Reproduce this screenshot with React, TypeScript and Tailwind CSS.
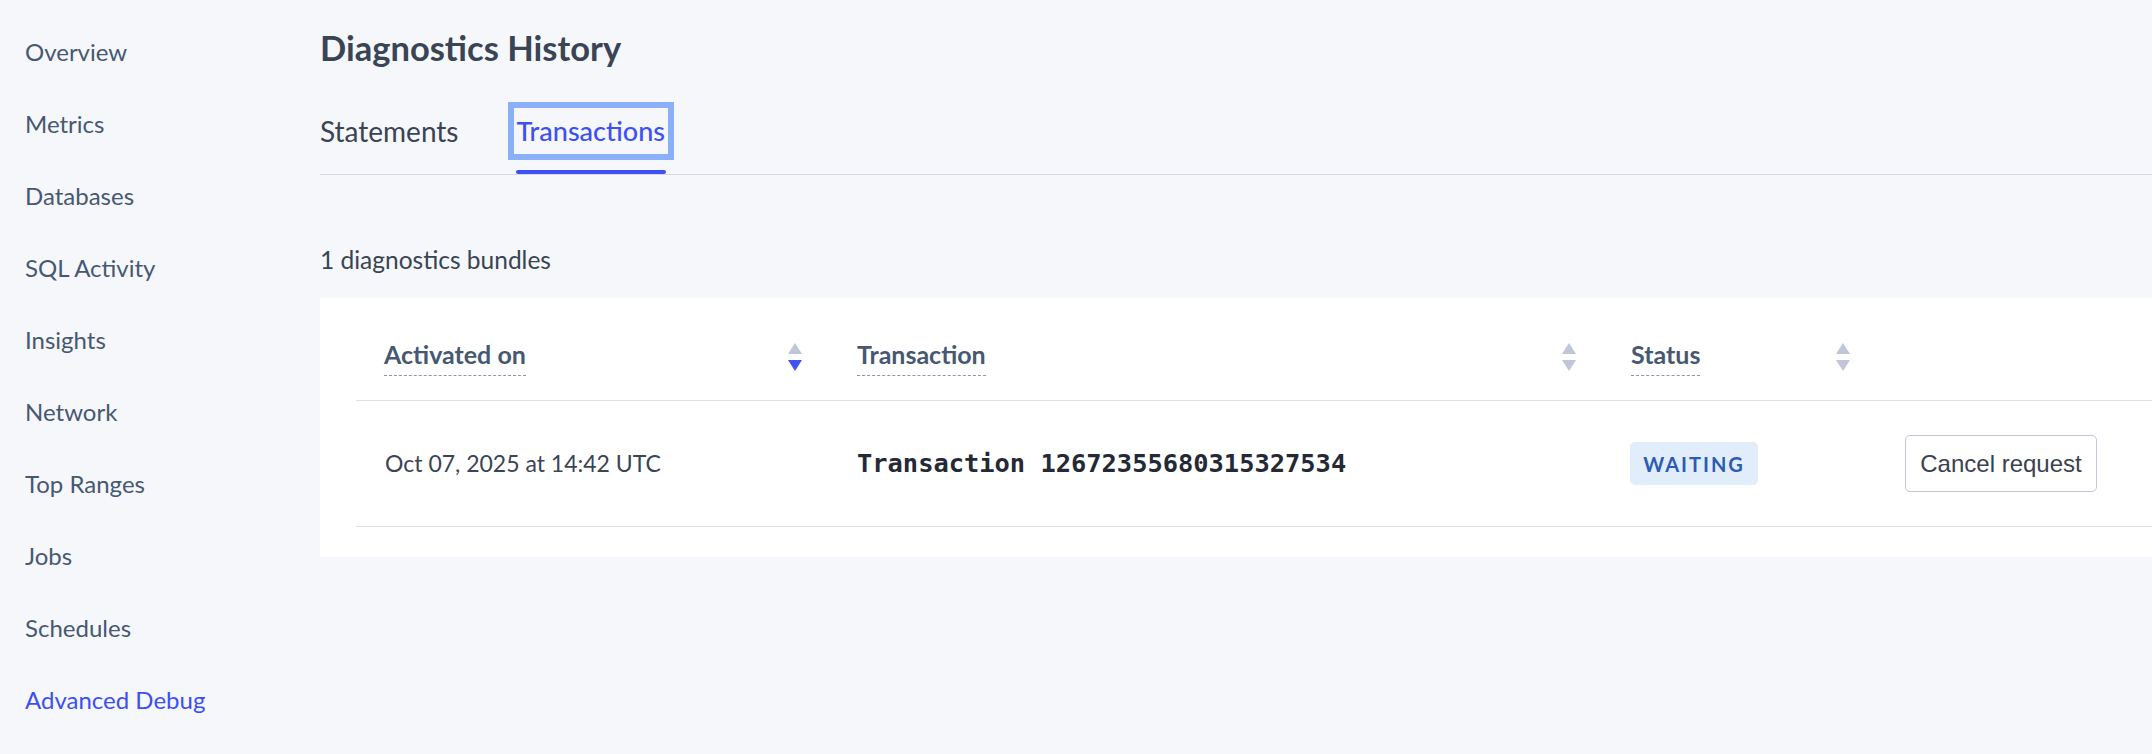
import React from "react";

const navItems = [
  "Overview",
  "Metrics",
  "Databases",
  "SQL Activity",
  "Insights",
  "Network",
  "Top Ranges",
  "Jobs",
  "Schedules",
  "Advanced Debug",
];

function SortIcon({ active }: { active?: boolean }) {
  return (
    <svg width="14" height="28" viewBox="0 0 14 28" className="shrink-0">
      <polygon points="7,0 14,11 0,11" fill="#c0c5d8" />
      <polygon points="0,17 14,17 7,28" fill={active ? "#3f51f7" : "#c0c5d8"} />
    </svg>
  );
}

function HeaderCell({
  label,
  width,
  sortable,
  active,
}: {
  label?: string;
  width: string;
  sortable?: boolean;
  active?: boolean;
}) {
  return (
    <div className={`${width} flex items-center justify-between pl-[28px] pr-[27px]`}>
      {label ? (
        <span className="border-b border-dashed border-[#8f95ab] pb-[6px] text-[25px] leading-[30px] font-bold text-[#475872]">
          {label}
        </span>
      ) : (
        <span />
      )}
      {sortable ? <SortIcon active={active} /> : null}
    </div>
  );
}

export default function App() {
  return (
    <div
      className="flex min-h-[754px] w-full bg-[#f5f7fa]"
      style={{ fontFamily: "Lato, 'Noto Sans', sans-serif" }}
    >
      <aside className="w-[320px] shrink-0 pl-[25px] pt-[16px]">
        <ul className="flex flex-col">
          {navItems.map((item) => (
            <li
              key={item}
              className={`h-[72px] flex items-center text-[24px] ${
                item === "Advanced Debug" ? "text-[#3c4ff5]" : "text-[#475872]"
              }`}
            >
              {item}
            </li>
          ))}
        </ul>
      </aside>

      <main className="flex-1 min-w-0">
        <h1 className="mt-[28px] h-[40px] leading-[40px] text-[34.5px] font-bold text-[#394455]">
          Diagnostics History
        </h1>

        <div className="mt-[40px] flex items-end border-b border-[#d6d9e6]">
          <div className="flex gap-[52px] ml-[-3px]">
            <div className="flex flex-col">
              <button className="h-[46px] px-[3px] text-[28px] leading-[46px] text-[#394455]">
                Statements
              </button>
              <div className="mt-[16px] h-[4px]" />
            </div>
            <div className="flex flex-col">
              <button className="h-[46px] px-[3px] text-[27px] leading-[46px] font-medium text-[#3d50f5] outline-[6px] outline-solid outline-[#8ab0fb]">
                Transactions
              </button>
              <div className="mt-[16px] h-[4px] mx-[2px] rounded-full bg-[#3e4ff5]" />
            </div>
          </div>
        </div>

        <div className="mt-[70px] h-[30px] leading-[30px] text-[24.5px] text-[#394455]">
          1 diagnostics bundles
        </div>

        <div className="mt-[23px] bg-white pl-[36px] pb-[30px]">
          <div className="flex h-[103px] pt-[16px] border-b border-[#dcdde6]">
            <HeaderCell label="Activated on" width="w-[473px]" sortable active />
            <HeaderCell label="Transaction" width="w-[774px]" sortable />
            <HeaderCell label="Status" width="w-[274px]" sortable />
            <div className="flex-1" />
          </div>
          <div className="flex h-[126px] items-center border-b border-[#dcdde6]">
            <div className="w-[473px] pl-[29px] text-[23px] text-[#394455]">
              Oct 07, 2025 at 14:42 UTC
            </div>
            <div
              className="w-[774px] pl-[28px] text-[25.4px] font-bold text-[#242a35]"
              style={{ fontFamily: "'DejaVu Sans Mono', monospace" }}
            >
              Transaction 12672355680315327534
            </div>
            <div className="w-[274px] pl-[27px]">
              <span className="flex h-[43px] w-[128px] items-center justify-center rounded-[5px] bg-[#e1edfb] text-[20px] font-bold tracking-[2px] text-[#2b5bb5]">
                WAITING
              </span>
            </div>
            <div className="flex-1 pl-[28px]">
              <button
                className="h-[57px] w-[192px] rounded-[5px] border border-[#c2c6d8] bg-white text-[24px] text-[#3a4150]"
                style={{ fontFamily: "'Liberation Sans', Arial, sans-serif" }}
              >
                Cancel request
              </button>
            </div>
          </div>
        </div>
      </main>
    </div>
  );
}
